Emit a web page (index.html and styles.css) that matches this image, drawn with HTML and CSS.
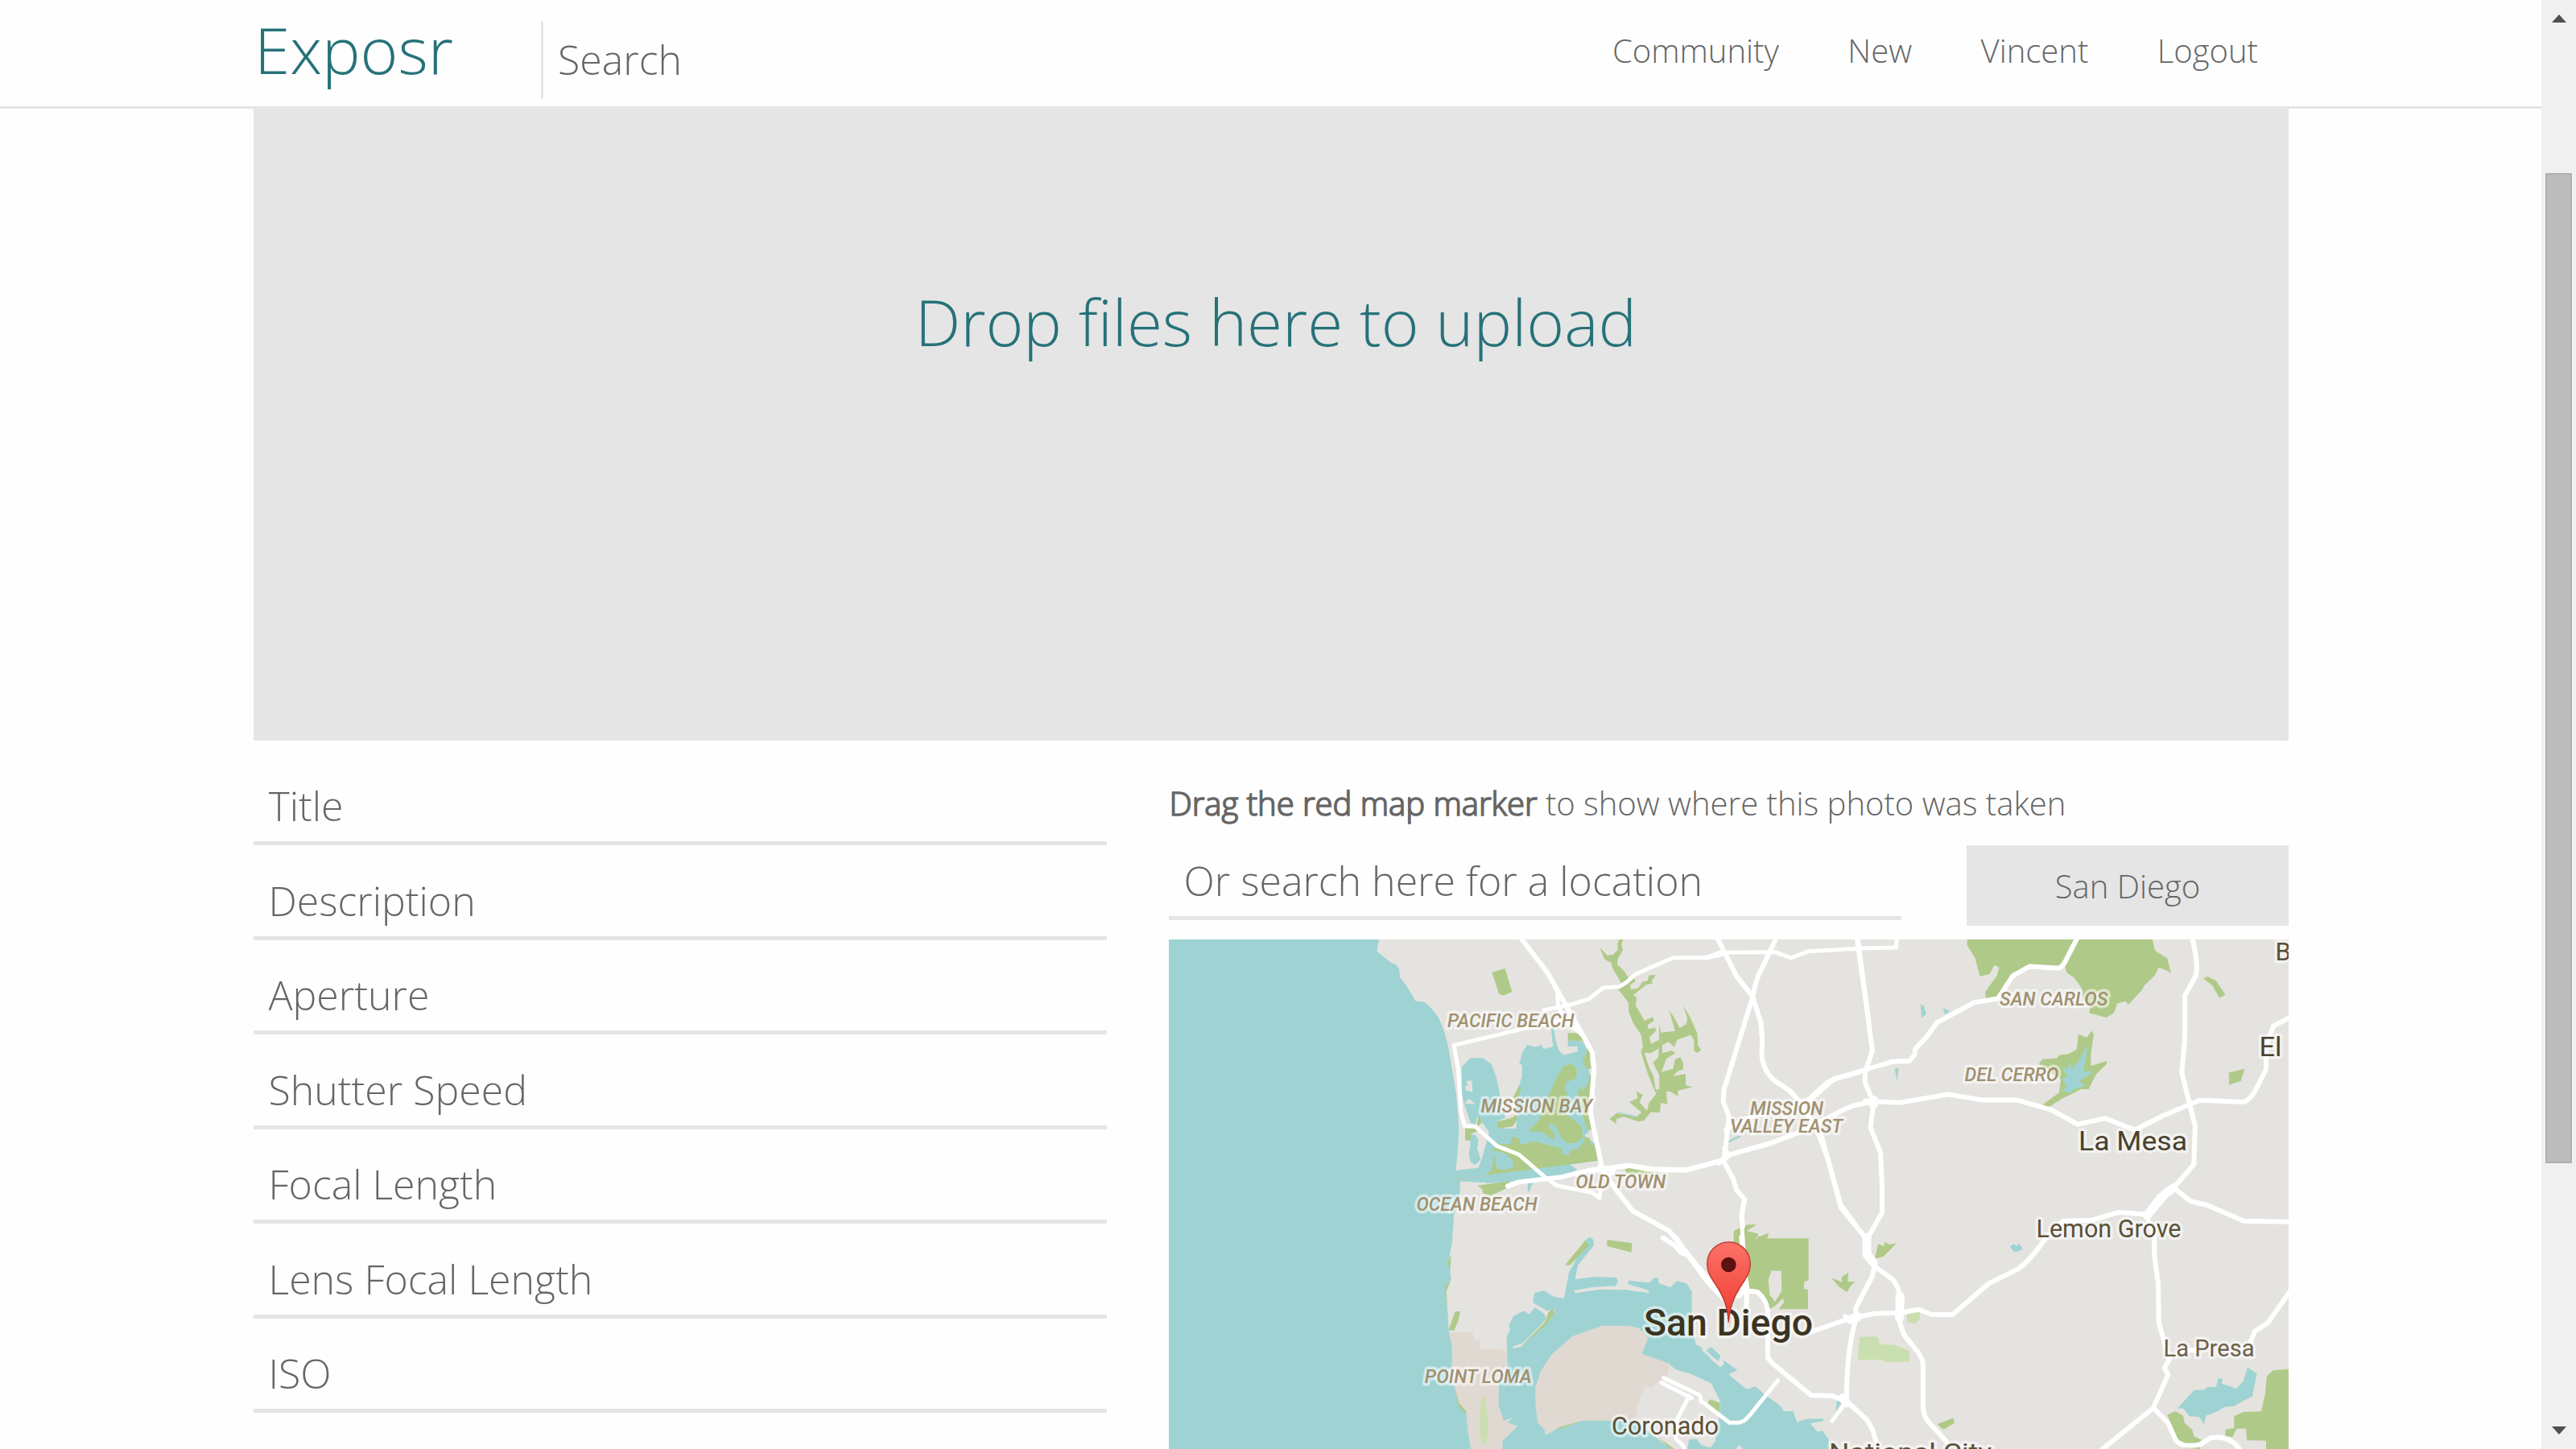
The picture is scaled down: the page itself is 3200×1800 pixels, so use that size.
FILE: index.html
```html
<!DOCTYPE html>
<html lang="en">
<head>
<meta charset="utf-8">
<title>Exposr</title>
<link rel="stylesheet" href="styles.css">
</head>
<body>
<div class="viewport">
  <div class="page">
    <header class="header">
      <div class="header-inner">
        <a class="brand">Exposr</a>
        <input class="search" type="text" placeholder="Search">
        <nav class="nav">
          <a>Community</a>
          <a>New</a>
          <a>Vincent</a>
          <a>Logout</a>
        </nav>
      </div>
    </header>
    <main class="main">
      <section class="dropzone"><span>Drop files here to upload</span></section>
      <div class="columns">
        <form class="fields">
          <input class="field" type="text" placeholder="Title">
          <input class="field" type="text" placeholder="Description">
          <input class="field" type="text" placeholder="Aperture">
          <input class="field" type="text" placeholder="Shutter Speed">
          <input class="field" type="text" placeholder="Focal Length">
          <input class="field" type="text" placeholder="Lens Focal Length">
          <input class="field" type="text" placeholder="ISO">
        </form>
        <section class="location">
          <p class="hint"><strong>Drag the red map marker</strong> <span>to show where this photo was taken</span></p>
          <div class="location-row">
            <input class="field place" type="text" placeholder="Or search here for a location">
            <button class="city" type="button">San Diego</button>
          </div>
          <svg class="map" viewBox="0 0 1391 633" width="1391" height="633">
            <defs>
              <linearGradient id="pin" x1="0" y1="0" x2="0" y2="1">
                <stop offset="0" stop-color="#fc7268"/>
                <stop offset="1" stop-color="#f03b31"/>
              </linearGradient>
            </defs>
            <rect class="land" width="1391" height="633"/>

            <!-- ocean and west coast -->
            <g transform="translate(-12 -17) scale(.44643 .41454)">
              <path class="water" d="M20 30H613L606 77L647 112L658 115L668 130L670 155L688 180L714 226L738 228L760 250L777 275L792 312L805 365L815 430L826 500L832 570L834 620L830 680L825 735L885 728L905 770L838 766L836 810L820 870L815 950L806 1000L812 1060L795 1085L803 1160L806 1215L815 1260L815 1330L825 1400L835 1435L855 1460L860 1520L870 1580H20Z"/>
              <path class="base" d="M806 1218H872L876 1243L892 1245L893 1268H945L967 1275V1310L943 1380L945 1450L965 1485L995 1500L955 1545V1580H872L860 1520L855 1460L835 1435L825 1400L815 1330V1260Z"/>
              <path class="park" d="M926 140L962 128L982 198L957 209L945 203ZM812 985L803 1010L810 1032ZM812 1062L794 1085L802 1150L799 1095ZM823 1157L838 1155L832 1185L820 1213L805 1212ZM823 1380L834 1430L857 1458L852 1462L832 1438Z"/>
              <path class="park light" d="M900 1412L908 1415L910 1450L915 1470V1520L908 1552L897 1548L891 1510L893 1450Z"/>
              <path class="park" d="M1247 941L1316 951L1314 979L1246 960Z"/>
            </g>

            <!-- Mission Bay -->
            <g transform="translate(348 113) scale(.33333)">
              <path class="water" d="M0 550V525L110 512L125 470L145 395L150 380L125 345L105 322L98 350L80 345L72 320L55 270L48 230V135L80 103H125L158 125L175 170L190 240L210 325L180 340L205 365H250L255 300L240 250L262 205L272 170V128L262 125L272 85L292 53L320 62L345 53L352 70L388 60L380 -10H390L398 40L410 75L428 92L480 78V60H443V38L480 34L505 50L515 80L500 110L522 150L530 240L520 380L505 392L555 430V485L450 500L478 518L440 540L350 555L140 570L120 558Z"/>
              <path class="water" d="M78 385L100 390L110 410L105 440L118 480L98 502L80 490L74 460L80 430ZM295 567L315 562L298 602L292 595ZM302 620L318 625L312 640L300 636Z"/>
              <path class="land" d="M62 190L85 186L88 230L62 222L60 208L72 203ZM75 255L100 275L58 272ZM120 378L148 382L118 460L105 440Z"/>
              <path class="park" d="M443 10H485L505 35L515 50L490 38H443ZM515 50L530 80L525 105L530 140L520 145L508 135L498 110L512 85ZM522 160L538 180L525 270L535 370L515 372L505 340L480 240L488 208L500 228L522 190ZM455 124L478 145L474 178L435 195L432 215L440 240L420 300L460 330L495 360L500 400L470 420H440L415 395L400 360L385 348L368 352L395 390L390 408L345 378L295 376L335 335L370 245L400 180L425 135ZM262 205L268 220L255 260L238 252ZM180 340L238 325L248 312L256 330L238 358L180 366ZM60 363L95 362L110 375L82 385L80 410H60ZM112 318L122 345L106 358L104 340ZM160 450L185 422L215 425L230 422L236 395L262 402L266 425L318 413L420 440V462L445 464L455 445L475 445L505 415L502 400L524 400L528 422L552 430L556 485L135 540L158 520L170 465L178 515L205 520L235 512L242 490L215 462L180 450ZM105 578L228 562L220 585L155 617L128 608L122 590ZM658 512L700 508L745 524L785 524L778 535L658 534Z"/>
              <path class="dune" d="M0 558L30 551L60 555L100 545L135 543"/>
            </g>

            <!-- Tecolote canyon -->
            <g transform="translate(528 -7) scale(.33333)">
              <path class="park" d="M95 15H112L102 40L108 60L88 95L87 115L110 135L130 165L150 165L155 178L135 190L138 208L165 203L180 180L200 175L205 155L232 153L215 175L220 185L195 190L148 228L160 240L155 265L188 323L220 310L223 325L200 340L203 355L230 350V363L208 385L212 410L243 395V335L250 368L303 362L280 285L298 310L320 352L345 335L348 315L333 268L358 310L385 370L388 418L400 432L385 444L373 436V395L360 377L310 395L300 422L278 402L255 415V445L290 435L304 444L270 465L252 515L295 503L302 468L322 460L333 480V505L312 512L295 530L342 522V565L370 570L313 585V605L285 588H270L274 635L250 630L246 666L212 665L185 697L165 700L112 682L85 690L82 708L58 690L85 668L160 680L178 665L132 627L163 612L158 587L182 600L170 628L198 660L205 630L232 598L200 520L175 440L183 420L175 375L145 330L130 290L128 255L90 207L105 190L68 125L65 108L40 95L22 52L50 80L70 78L90 60L88 38Z"/>
              <path class="land" d="M188 443L212 445L243 427L240 460L220 480L243 525L244 580H230L222 530L205 495Z"/>
              <path class="water" d="M80 663L92 664L160 681L150 684ZM495 773L540 752L548 757L500 780ZM758 694L764 688L770 696Z"/>
            </g>

            <!-- San Diego Bay and Coronado -->
            <g transform="translate(408 373) scale(.33333)">
              <path class="water" d="M330 0L345 -10L358 0L360 22L300 95L290 148L360 139L443 140L450 155L442 172L350 178L285 190L290 199L380 186L480 187L565 198L566 190L486 165L490 152L562 160L570 158L583 143L600 142L602 163L645 178L670 154L705 163L725 192V330L740 390L762 402L765 415L820 460L835 472L845 462L842 448L895 487L862 502L930 558L962 547L1000 580L1052 617L1070 640L1102 638L1117 680L1150 668L1215 667V676L1165 684L1192 715L1212 712L1235 745L1240 790H18L20 750L75 695L35 680L60 662L25 675L5 620V530L38 470L35 360L48 335L43 320L60 285L98 265L120 278L140 252L170 272L183 288L180 300L95 385L58 398L60 405L90 398L175 318L212 272V260L185 265L133 235L138 198L175 190L205 210L248 220L268 120L285 90Z"/>
              <path class="park" d="M328 2L342 22L270 95L252 95ZM208 258L212 275L178 320L85 400L180 305L190 270Z"/>
              <path class="land" d="M775 412L795 402L832 433L828 450L845 465L830 475L795 445Z"/>
              <path class="water" d="M778 412L797 400L832 432L825 452L800 435Z"/>
              <path class="land" d="M640 463L662 482L720 500L797 535L830 600V640L820 700L812 750L795 775L760 765L742 742L715 745L705 790H660L560 712L512 680L520 600L550 540ZM885 785L902 765L925 790H880Z"/>
              <path class="base" d="M562 365L540 425L645 463L632 510L595 530L578 552L552 547L522 615L517 674H320L225 703L178 730L177 710L150 680L142 610V550L162 490L205 425L280 360L388 321H490L530 330Z"/>
              <path class="park" d="M793 595L830 608L828 645L783 608ZM225 700L320 675L235 705ZM598 735L660 780H645Z"/>
              <path class="park" d="M880 -5H1160V153L1145 155L1142 182L1158 187V259H1048L1068 235L1065 218L1032 250L1012 258L990 205L965 188L930 180L880 100Z"/>
              <path class="land" d="M1022 115L1058 117L1060 190L1035 232L1015 205L1010 150Z"/>
              <path class="park" d="M1405 75L1420 15L1440 25L1445 8L1460 18L1488 13L1440 62L1412 70ZM1245 142L1285 158L1282 140L1308 122L1306 157L1336 157L1318 170L1303 196L1270 172Z"/>
              <path class="park light" d="M1350 362L1418 361L1425 390L1480 392L1538 415L1535 455L1442 456L1435 447H1343ZM1527 268H1560V314L1527 308Z"/>
              <path class="water" d="M1265 600L1285 602L1262 640Z"/>
            </g>

            <!-- eastern parks and lakes -->
            <g transform="translate(688 -17) scale(.45918 .41454)">
              <path class="park" d="M662 30H1160L1170 75L1203 98L1213 142L1197 132L1180 125L1168 150L1140 180L1135 192L1097 237L1090 226L1068 233L1058 262L1038 275L992 262L994 245L978 225L970 185L950 155L930 140L925 115L900 125H835L800 140L762 190L745 215L712 218L710 198L742 150L748 125L735 118L722 145L696 152L682 95L661 58ZM1300 158L1312 152L1335 165L1360 207L1344 217L1325 180ZM1369 440L1412 429L1402 465L1370 477ZM998 315L1004 325L996 385V420L1040 405L1038 415L1010 445L990 490H970L915 520L888 540L870 545L867 535L910 500L915 460L855 415L865 400L905 397L910 388L935 385L958 370L962 325L985 335ZM30 915L60 897L92 895L65 915L95 922V942L120 937L125 920L30 960ZM580 1493L624 1475L627 1490L597 1510ZM1203 1465L1225 1455L1245 1467L1250 1490L1270 1510L1275 1530L1295 1540L1290 1568L1250 1565L1225 1530ZM1540 1328L1488 1332L1472 1350L1468 1400L1457 1455L1408 1457L1383 1470L1384 1505L1360 1510V1530L1380 1532L1390 1507H1416L1418 1542L1470 1543V1580H1540Z"/>
              <path class="park light" d="M498 1157H533V1178L520 1193L500 1187Z"/>
              <path class="water" d="M987 358L982 400L975 435L1003 438L965 465L980 480L952 490L940 502L922 495L930 478L918 460L932 450L915 422L935 430V405L945 428L960 410ZM535 236L543 238L551 265L538 277ZM596 247L615 255L602 267ZM465 428L476 425L472 467ZM777 962L788 953L794 960L803 952L812 970L795 977H788ZM1420 1323L1445 1342L1433 1410L1382 1440L1358 1442L1338 1455L1308 1468L1302 1493L1290 1472L1262 1470L1247 1447H1230L1275 1392L1305 1390L1310 1382L1335 1383L1340 1357L1353 1357L1350 1372L1390 1387L1408 1365Z"/>
            </g>

            <!-- roads -->
            <g class="road" transform="translate(-12 -17) scale(.44643 .41454)">
              <path class="wide" d="M1005 35L1080 140L1130 235L1175 320L1205 380L1210 430L1200 560L1232 725L1270 790L1318 855L1420 915L1475 990L1570 1115"/>
              <path d="M1108 200L1110 240L1130 285L1175 325M1070 253L1150 235L1195 220L1235 186L1280 183L1300 170L1325 145L1430 96H1525L1575 84M1155 275L1000 312L820 358L832 430L840 560L850 600L880 602L940 660L1000 685L1070 750L1105 778L1205 800L1225 815L1228 790M1400 935L1435 960L1450 980L1475 990"/>
              <path class="wide" d="M970 780L1000 768L1120 753L1200 732L1310 719L1360 730L1465 733L1560 705"/>
            </g>
            <g class="road" transform="translate(528 -7) scale(.33333)">
              <path class="wide" d="M460 15L490 75L530 155L592 235C605 165 615 150 640 100L680 15M592 235L622 330L628 400L625 450C630 500 650 525 670 545L730 585L765 625M592 235L485 580L482 625L503 680L485 850L520 915L532 955L562 990L550 1050L555 1090"/>
              <path d="M420 88L470 70L675 68L735 90L800 65L1020 53M490 730L560 690L640 670M485 800L505 825"/>
              <path class="wide" d="M0 882L130 863L220 877L340 880L470 848L500 825L660 780L770 738L900 672Q960 635 1020 630M765 625L795 622L870 555Q900 535 940 530L1020 505M765 625L850 760L880 870L920 1010L975 1085M980 15L1022 310"/>
              <path class="wide" d="M20 870L75 880L45 910M465 855L500 830"/>
            </g>
            <g class="road" transform="translate(688 -17) scale(.45918 .41454)">
              <path class="wide" d="M365 35L405 375L385 440V470L408 530L400 605L427 680L431 770V860L390 940L385 970L410 1020L460 1060Q478 1085 478 1110L473 1170L490 1225L530 1280Q542 1300 542 1320V1445Q545 1470 555 1485L605 1545M258 620L285 700L320 845L390 940M410 1020L405 1050L360 1145V1180Q335 1270 335 1425L390 1480L405 1510L415 1545M240 1217L340 1178L410 1162L480 1160L530 1150L565 1165H622L720 1072L800 1028Q830 1005 875 935L920 885L1000 882L1070 859L1145 865L1180 812L1220 785L1275 715L1278 600L1242 440L1250 340V210L1280 150Q1288 120 1270 35"/>
              <path class="wide" d="M230 528L300 460L390 430L460 407L505 405L520 385V370L550 335L580 290L680 230L745 218L785 150L830 122L910 127Q922 120 930 100L960 35M385 525L480 530L610 505L700 522H795L890 552L960 595L1035 577L1115 612L1190 570L1290 523L1410 528Q1430 520 1445 485L1470 430V360L1490 300L1540 272M1220 785L1265 825L1310 837L1410 885L1540 887M1145 865L1168 930V990L1178 1070L1180 1190L1208 1300L1195 1325L1205 1345L1165 1445L1020 1575M1165 1445L1205 1490L1225 1540Q1240 1565 1290 1555L1320 1535Q1370 1525 1400 1570M1535 1095L1475 1190L1440 1215L1425 1255M1240 1272H1280"/>
              <path d="M470 35V65L395 67M55 830L52 900L60 1030L50 1100"/>
              <path class="junction" d="M390 935V985L408 1010M480 1110L478 1175M345 1180L365 1172M408 522V535M1148 868L1195 805L1220 785M325 1415L335 1430"/>
            </g>
            <g class="road" transform="translate(408 373) scale(.33333)">
              <path class="wide" d="M665 -10L700 45L790 165L860 235M910 -10L918 100L930 175L928 260M890 210L930 190L970 195Q1005 225 1008 270V440L1025 460L1170 580L1250 582L1300 605M900 210L930 175"/>
              <path d="M620 -8L660 20L685 48L705 45M612 533L725 590M620 515L755 580L760 605M765 605L830 655L865 682H900L920 675L940 655L1045 525M715 582L665 680V740L690 765L702 790M1300 605L1248 675M1295 285L1335 300"/>
            </g>

            <!-- place names -->
            <g class="area">
              <text x="346" y="108.6" textLength="157.5" lengthAdjust="spacingAndGlyphs">PACIFIC BEACH</text>
              <text x="387.5" y="214.7" textLength="138.5" lengthAdjust="spacingAndGlyphs">MISSION BAY</text>
              <text x="307.5" y="337" textLength="150" lengthAdjust="spacingAndGlyphs">OCEAN BEACH</text>
              <text x="505.3" y="309" textLength="112" lengthAdjust="spacingAndGlyphs">OLD TOWN</text>
              <text x="317.8" y="551" textLength="133" lengthAdjust="spacingAndGlyphs">POINT LOMA</text>
              <text x="722" y="218" textLength="91" lengthAdjust="spacingAndGlyphs">MISSION</text>
              <text x="697" y="240.3" textLength="140" lengthAdjust="spacingAndGlyphs">VALLEY EAST</text>
              <text x="1032" y="82" textLength="134.5" lengthAdjust="spacingAndGlyphs">SAN CARLOS</text>
              <text x="988.4" y="176" textLength="117" lengthAdjust="spacingAndGlyphs">DEL CERRO</text>
            </g>
            <g class="town">
              <text class="capital" x="590" y="492" textLength="210" lengthAdjust="spacingAndGlyphs">San Diego</text>
              <text x="550" y="614.7" textLength="133" lengthAdjust="spacingAndGlyphs">Coronado</text>
              <text x="820" y="648" textLength="202" lengthAdjust="spacingAndGlyphs">National City</text>
              <text class="large" x="1130" y="262.4" textLength="135" lengthAdjust="spacingAndGlyphs">La Mesa</text>
              <text class="large" x="1354.5" y="145" textLength="28" lengthAdjust="spacingAndGlyphs">El</text>
              <text x="1374.5" y="25.7">B</text>
              <text x="1077.5" y="370" textLength="180" lengthAdjust="spacingAndGlyphs">Lemon Grove</text>
              <text class="small" x="1235.5" y="517.8" textLength="113" lengthAdjust="spacingAndGlyphs">La Presa</text>
            </g>

            <g transform="translate(408 373) scale(.33333)">
              <path class="pin" d="M862 308C858 250 845 220 825 185C800 145 782 125 782 90A80 81 0 0 1 943 90C943 125 925 145 900 185C880 220 867 250 862 308Z"/>
              <circle class="pin-dot" cx="862" cy="93" r="28"/>
            </g>
          </svg>
        </section>
      </div>
    </main>
  </div>
  <div class="scrollbar">
    <svg class="arrow" viewBox="0 0 18 10"><path d="M0 10L9 0L18 10Z"/></svg>
    <div class="thumb"></div>
    <svg class="arrow down" viewBox="0 0 18 10"><path d="M0 0H18L9 10Z"/></svg>
  </div>
</div>
</body>
</html>
```

FILE: styles.css
```css
* { box-sizing: border-box; }

body {
  margin: 0;
  background: #fefefe;
  color: #666;
  font-family: "Open Sans", sans-serif;
  font-weight: 300;
  font-size: 40px;
}

.viewport {
  display: flex;
  width: 3200px;
  height: 1800px;
  overflow: hidden;
}

.page {
  flex: 1;
  min-width: 0;
}

.header {
  height: 135px;
  border-bottom: 3px solid #e5e5e5;
}

.header-inner,
.main {
  width: 2528px;
  margin-left: 315px;
}

.header-inner {
  display: flex;
  align-items: flex-start;
}

.brand {
  width: 357px;
  padding-left: 1px;
  color: #267279;
  font-size: 80px;
  line-height: 109px;
  margin-top: 6px;
}

input {
  border: 0;
  border-radius: 0;
  background: none;
  outline: 0;
  font: inherit;
  font-size: 50px;
  color: #666;
}

input::placeholder {
  color: #666;
  opacity: 1;
}

.search {
  width: 700px;
  height: 95px;
  margin-top: 27px;
  padding: 0 0 1px 18px;
  border-left: 3px solid #e5e5e5;
}

.nav {
  display: flex;
  gap: 85.5px;
  margin: 36px 38px 0 auto;
  line-height: 54px;
}

.dropzone {
  height: 785px;
  padding-top: 209px;
  background: #e5e5e5;
  color: #267279;
  font-size: 80px;
  line-height: 109px;
  text-align: center;
}

.dropzone span { padding-left: 12px; }

.columns {
  display: flex;
  gap: 77px;
}

.fields {
  display: flex;
  flex-direction: column;
  width: 1060px;
  padding-top: 12.5px;
}

.field {
  height: 117.5px;
  padding: 25px 0 0 18.5px;
  border-bottom: 5px solid #e5e5e5;
}

.location { width: 1391px; }

.hint {
  margin: 0;
  padding: 51px 0 0 .5px;
  line-height: 54px;
}

.hint strong {
  font-weight: 300;
  -webkit-text-stroke: 1.6px #666;
}

.location-row {
  display: flex;
  justify-content: space-between;
  align-items: flex-start;
  margin: 25px 0 17px;
  height: 100px;
}

.place {
  width: 910px;
  height: 92.5px;
  padding-top: 0;
}

.city {
  width: 400px;
  height: 100px;
  padding: 0;
  border: 0;
  background: #e5e5e5;
  color: #666;
  font: inherit;
}

.map { display: block; }

.land { fill: #e5e3df; }
.water { fill: #9fd3d3; }
.park { fill: #afca88; }
.park.light { fill: #c9dfaf; }
.base { fill: #dfd9d2; }

.dune {
  fill: none;
  stroke: #b9cdb4;
  stroke-width: 3;
}

.road path {
  fill: none;
  stroke: #fff;
  stroke-width: 5px;
  stroke-linejoin: round;
  stroke-linecap: round;
  vector-effect: non-scaling-stroke;
}

.road .wide { stroke-width: 6px; }
.road .junction { stroke-width: 11px; }

.map text {
  font-family: Roboto, sans-serif;
  paint-order: stroke;
  stroke: rgba(255, 255, 255, .55);
  stroke-width: 7px;
  stroke-linejoin: round;
}

.area text {
  font-size: 23.5px;
  font-style: italic;
  font-weight: 500;
  fill: #a09070;
}

.town text {
  font-size: 31px;
  font-weight: 400;
  fill: #5a5038;
}

.map .town .large { font-size: 34px; fill: #4a412d; }
.map .town .small { font-size: 29px; fill: #6b6049; }
.map .town .capital { font-size: 46px; font-weight: 500; fill: #3c3422; }

.pin {
  fill: url(#pin);
  stroke: #b9362e;
  stroke-width: 4;
}

.pin-dot { fill: #5c1210; }

.scrollbar {
  display: flex;
  flex-direction: column;
  align-items: center;
  width: 43px;
  padding: 18px 0;
  background: #f0f0f0;
}

.arrow {
  width: 18px;
  height: 10px;
  fill: #505050;
}

.thumb {
  width: 33px;
  height: 1230px;
  margin-top: 187px;
  background: #bcbcbc;
  border: 2px solid #b0b0b0;
}

.down { margin-top: auto; }
```
